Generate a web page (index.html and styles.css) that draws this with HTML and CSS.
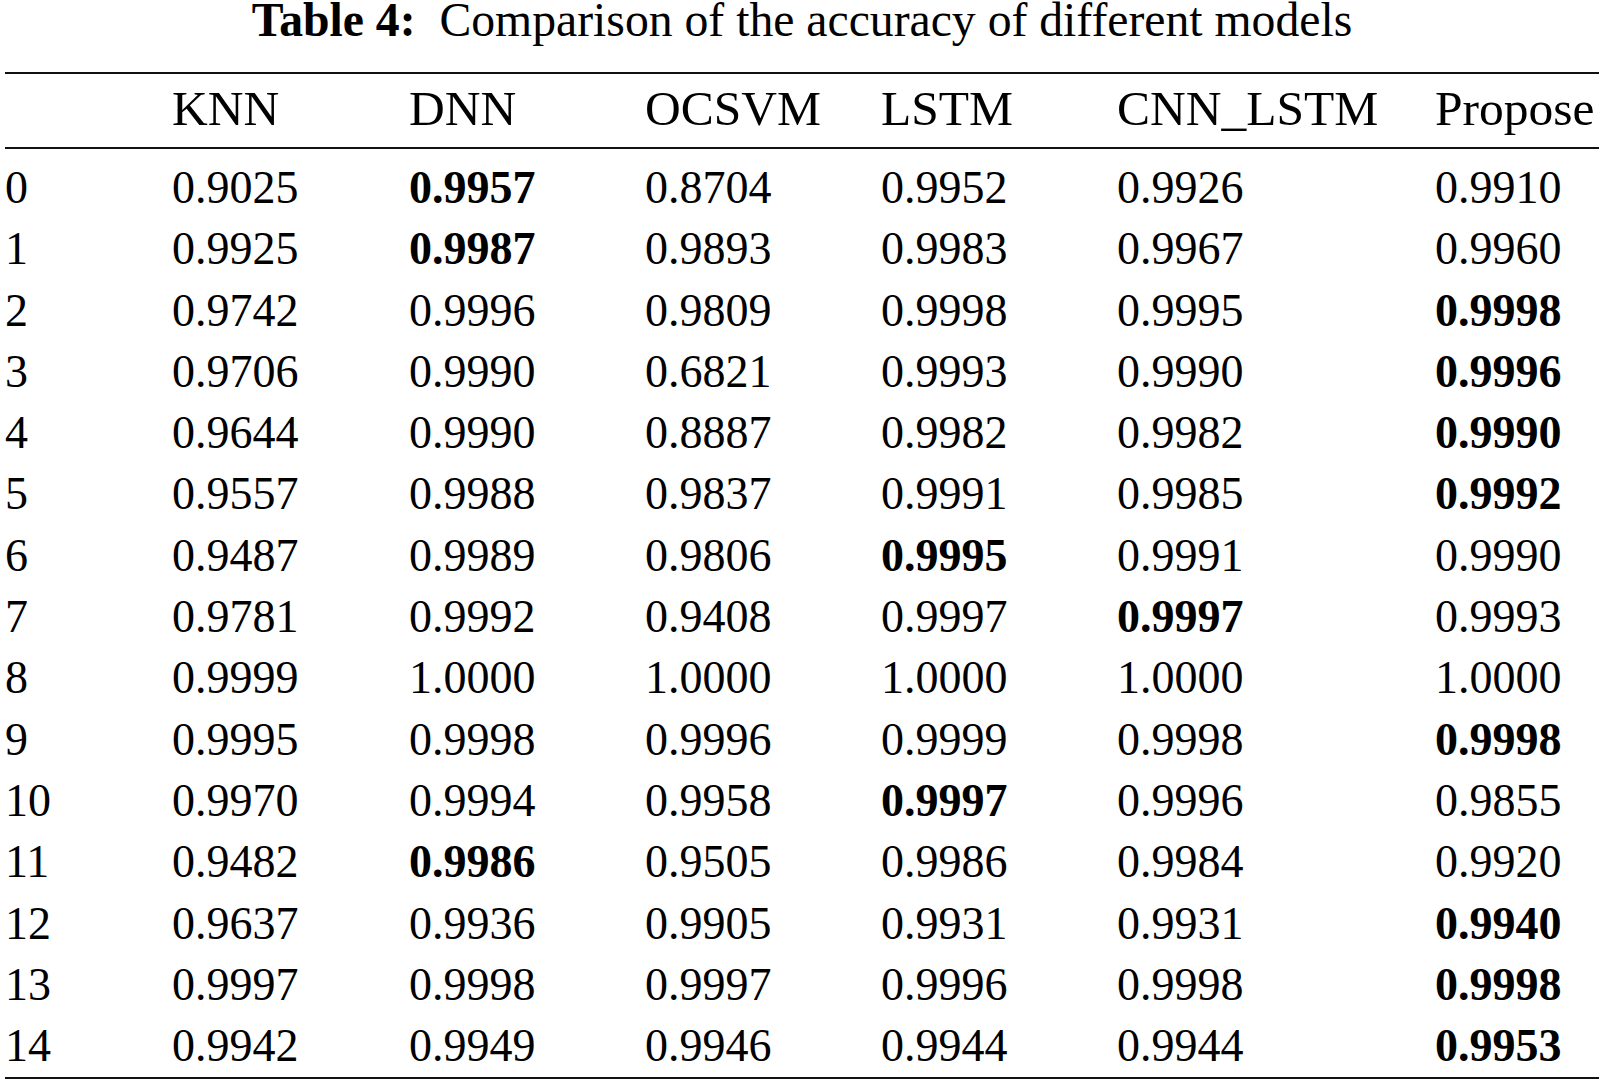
FILE: index.html
```html
<!DOCTYPE html>
<html>
<head>
<meta charset="utf-8">
<link rel="stylesheet" href="styles.css">
</head>
<body>
<div class="caption"><b>Table 4:</b>&nbsp; Comparison of the accuracy of different models</div>
<table class="results">
<colgroup>
<col class="c0"><col class="c1"><col class="c2"><col class="c3"><col class="c4"><col class="c5"><col class="c6">
</colgroup>
<thead>
<tr><th></th><th>KNN</th><th>DNN</th><th>OCSVM</th><th>LSTM</th><th>CNN_LSTM</th><th>Propose</th></tr>
</thead>
<tbody>
<tr class="first"><td>0</td><td>0.9025</td><td class="best">0.9957</td><td>0.8704</td><td>0.9952</td><td>0.9926</td><td>0.9910</td></tr>
<tr><td>1</td><td>0.9925</td><td class="best">0.9987</td><td>0.9893</td><td>0.9983</td><td>0.9967</td><td>0.9960</td></tr>
<tr><td>2</td><td>0.9742</td><td>0.9996</td><td>0.9809</td><td>0.9998</td><td>0.9995</td><td class="best">0.9998</td></tr>
<tr><td>3</td><td>0.9706</td><td>0.9990</td><td>0.6821</td><td>0.9993</td><td>0.9990</td><td class="best">0.9996</td></tr>
<tr><td>4</td><td>0.9644</td><td>0.9990</td><td>0.8887</td><td>0.9982</td><td>0.9982</td><td class="best">0.9990</td></tr>
<tr><td>5</td><td>0.9557</td><td>0.9988</td><td>0.9837</td><td>0.9991</td><td>0.9985</td><td class="best">0.9992</td></tr>
<tr><td>6</td><td>0.9487</td><td>0.9989</td><td>0.9806</td><td class="best">0.9995</td><td>0.9991</td><td>0.9990</td></tr>
<tr><td>7</td><td>0.9781</td><td>0.9992</td><td>0.9408</td><td>0.9997</td><td class="best">0.9997</td><td>0.9993</td></tr>
<tr><td>8</td><td>0.9999</td><td>1.0000</td><td>1.0000</td><td>1.0000</td><td>1.0000</td><td>1.0000</td></tr>
<tr><td>9</td><td>0.9995</td><td>0.9998</td><td>0.9996</td><td>0.9999</td><td>0.9998</td><td class="best">0.9998</td></tr>
<tr><td>10</td><td>0.9970</td><td>0.9994</td><td>0.9958</td><td class="best">0.9997</td><td>0.9996</td><td>0.9855</td></tr>
<tr><td>11</td><td>0.9482</td><td class="best">0.9986</td><td>0.9505</td><td>0.9986</td><td>0.9984</td><td>0.9920</td></tr>
<tr><td>12</td><td>0.9637</td><td>0.9936</td><td>0.9905</td><td>0.9931</td><td>0.9931</td><td class="best">0.9940</td></tr>
<tr><td>13</td><td>0.9997</td><td>0.9998</td><td>0.9997</td><td>0.9996</td><td>0.9998</td><td class="best">0.9998</td></tr>
<tr class="last"><td>14</td><td>0.9942</td><td>0.9949</td><td>0.9946</td><td>0.9944</td><td>0.9944</td><td class="best">0.9953</td></tr>
</tbody>
</table>
</body>
</html>
```

FILE: styles.css
```css
html, body {
  margin: 0;
  padding: 0;
  background: #ffffff;
}

body {
  font-family: "Liberation Serif", "Times New Roman", serif;
  color: #000000;
}

.caption {
  font-size: 47.7px;
  line-height: 40px;
  text-align: center;
  margin-bottom: 32px;
  white-space: nowrap;
}

.caption b {
  font-weight: bold;
}

.results {
  margin-left: 5px;
  width: 1594px;
  border-collapse: collapse;
  table-layout: fixed;
  font-size: 46px;
  border-top: 2px solid #111;
  border-bottom: 2px solid #111;
}

.c0 { width: 167px; }
.c1 { width: 237px; }
.c2 { width: 236px; }
.c3 { width: 236px; }
.c4 { width: 236px; }
.c5 { width: 318px; }
.c6 { width: 164px; }

.results th,
.results td {
  padding: 0;
  text-align: left;
  white-space: nowrap;
  vertical-align: baseline;
}

.results thead th {
  font-weight: normal;
  font-size: 49.5px;
  line-height: 61px;
  padding-top: 4px;
  padding-bottom: 8px;
  border-bottom: 2px solid #111;
}

.results tbody td {
  line-height: 61.3px;
}

.results tbody tr.first td {
  padding-top: 8px;
}

.results tbody tr.last td {
  padding-bottom: 1px;
}

.results td.best {
  font-weight: bold;
}
```
